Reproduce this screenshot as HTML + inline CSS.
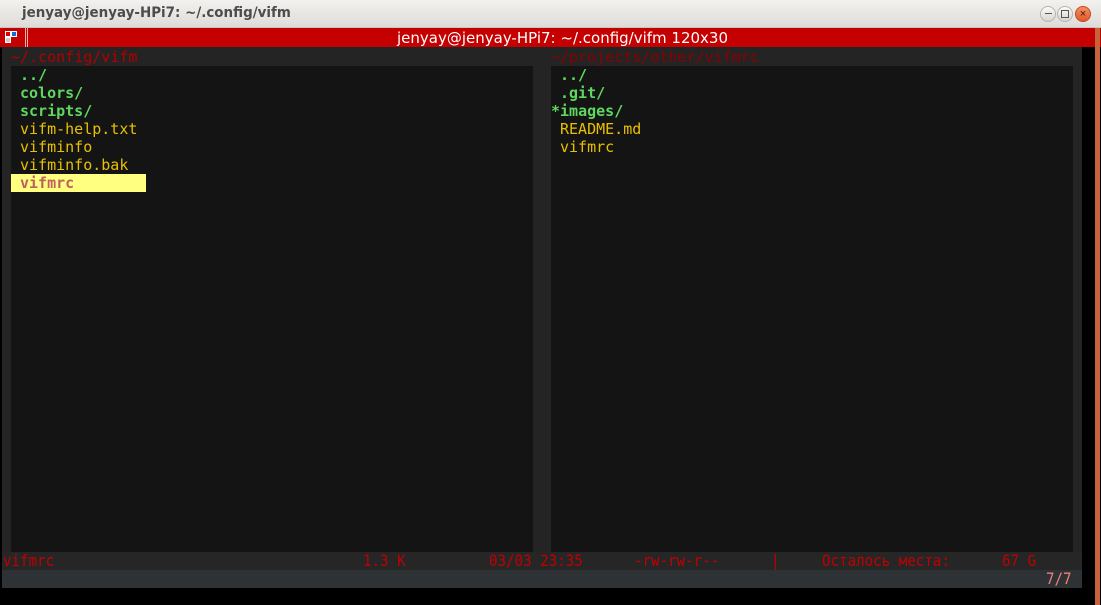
<!DOCTYPE html>
<html><head><meta charset="utf-8"><style>
*{margin:0;padding:0;box-sizing:border-box}
body{width:1101px;height:605px;overflow:hidden;background:#000;position:relative;font-family:"DejaVu Sans Mono","Liberation Mono",monospace}
.a{position:absolute}
.t{position:absolute;font-size:15px;line-height:18px;white-space:pre;font-weight:bold}
.n{font-weight:normal}
.g{color:#5fd75f}.y{color:#e8c000}
.s{position:absolute;top:552px;font:16px/18px "DejaVu Sans Mono",monospace;color:#c00000;white-space:pre;transform:scaleX(0.885);transform-origin:left}
</style></head><body>
<div class="a" style="left:0;top:0;width:1101px;height:28px;background:linear-gradient(#f2f1ef,#dfdcd8);border-bottom:1px solid #c9c6c2"></div>
<div class="a" style="left:22px;top:5px;font:bold 14px 'DejaVu Sans','Liberation Sans',sans-serif;color:#4c4c4c;transform:scaleX(0.96);transform-origin:left">jenyay@jenyay-HPi7: ~/.config/vifm</div>
<div class="a" style="left:1040px;top:6px;width:16px;height:16px;border-radius:50%;background:linear-gradient(#fbfbfa,#d6d3cf);border:1px solid #b8b4ae"></div>
<div class="a" style="left:1045px;top:13px;width:7px;height:1px;background:#555"></div>
<div class="a" style="left:1057px;top:6px;width:16px;height:16px;border-radius:50%;background:linear-gradient(#fbfbfa,#d6d3cf);border:1px solid #b8b4ae"></div>
<div class="a" style="left:1061px;top:10px;width:8px;height:8px;border:1px solid #555"></div>
<div class="a" style="left:1075px;top:6px;width:16px;height:16px;border-radius:50%;background:linear-gradient(#f6905e,#e0582a);border:1px solid #c04a20;color:#3a1a10;font:11px sans-serif;text-align:center;line-height:14px">×</div>
<div class="a" style="left:0;top:28px;width:1101px;height:19px;background:#c40000"></div>
<div class="a" style="left:5px;top:31px;width:6px;height:6px;background:#d00;border:1px solid #fff"></div>
<div class="a" style="left:11px;top:31px;width:6px;height:6px;background:#1070d0;border:1px solid #fff"></div>
<div class="a" style="left:5px;top:37px;width:6px;height:6px;background:#ccc;border:1px solid #fff"></div>
<div class="a" style="left:25px;top:28px;width:1px;height:19px;background:#f0b0b0"></div>
<div class="a" style="left:27px;top:28px;width:1px;height:19px;background:#f0b0b0"></div>
<div class="a" style="left:397px;top:29px;font:15px 'DejaVu Sans','Liberation Sans',sans-serif;color:#fff;white-space:pre">jenyay@jenyay-HPi7: ~/.config/vifm 120x30</div>
<div class="a" style="left:2px;top:47px;width:1080px;height:541px;background:#242424"></div>
<div class="a" style="left:1095px;top:28px;width:5px;height:577px;background:#c8623a"></div>
<div class="a" style="left:11px;top:66px;width:522px;height:486px;background:#141414"></div>
<div class="a" style="left:551px;top:66px;width:522px;height:486px;background:#141414"></div>
<div class="t n" style="left:11px;top:48px;color:#b00000">~/.config/vifm</div>
<div class="t n" style="left:551px;top:48px;color:#8a0000">~/projects/other/vifmrc</div>
<div class="t g" style="left:20px;top:66px">../</div>
<div class="t g" style="left:20px;top:84px">colors/</div>
<div class="t g" style="left:20px;top:102px">scripts/</div>
<div class="t y n" style="left:20px;top:120px">vifm-help.txt</div>
<div class="t y n" style="left:20px;top:138px">vifminfo</div>
<div class="t y n" style="left:20px;top:156px">vifminfo.bak</div>
<div class="a" style="left:11px;top:174px;width:135px;height:18px;background:#ffff80"></div>
<div class="t" style="left:20px;top:174px;color:#c06060">vifmrc</div>
<div class="t g" style="left:560px;top:66px">../</div>
<div class="t g" style="left:560px;top:84px">.git/</div>
<div class="t g" style="left:551px;top:102px">*images/</div>
<div class="t y n" style="left:560px;top:120px">README.md</div>
<div class="t y n" style="left:560px;top:138px">vifmrc</div>
<div class="a" style="left:2px;top:552px;width:1080px;height:18px;background:#262626"></div>
<div class="s" style="left:3px">vifmrc</div>
<div class="s" style="left:363px">1.3 K</div>
<div class="s" style="left:489px">03/03 23:35</div>
<div class="s" style="left:634px">-rw-rw-r--</div>
<div class="s" style="left:771px">|</div>
<div class="s" style="left:822px">Осталось места:</div>
<div class="s" style="left:1002px">67 G</div>
<div class="a" style="left:2px;top:570px;width:1080px;height:18px;background:#2e3234"></div>
<div class="s" style="left:1046px;top:570px;color:#f08080">7/7</div>
</body></html>
